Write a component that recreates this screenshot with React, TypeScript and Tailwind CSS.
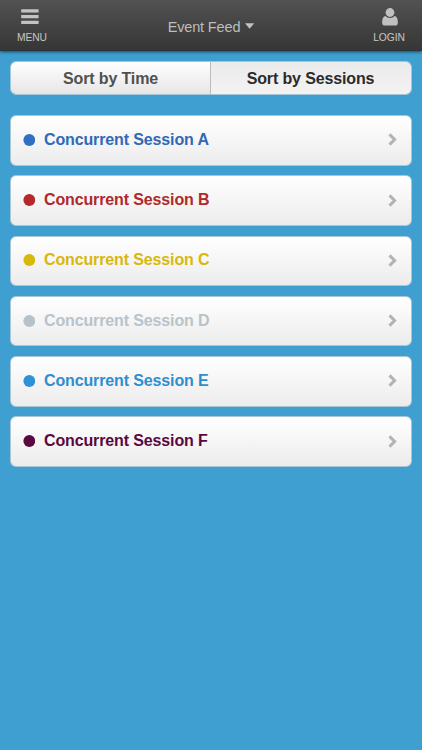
const sessions = [
  { name: "Concurrent Session A", text: "text-[#3069b8]", dot: "fill-[#2f70c2]" },
  { name: "Concurrent Session B", text: "text-[#b0292b]", dot: "fill-[#b5292b]" },
  { name: "Concurrent Session C", text: "text-[#d8b80b]", dot: "fill-[#d8b80b]" },
  { name: "Concurrent Session D", text: "text-[#b8c3ca]", dot: "fill-[#b5c2ca]" },
  { name: "Concurrent Session E", text: "text-[#2e8ed0]", dot: "fill-[#2e92d6]" },
  { name: "Concurrent Session F", text: "text-[#5a0840]", dot: "fill-[#5a0840]" },
];

function Chevron() {
  return (
    <svg width="9" height="13" viewBox="0 0 9 13" fill="none" stroke="#b3b3b3" strokeWidth="3">
      <path d="M1.500 1.400 6.600 6.500 1.500 11.600" />
    </svg>
  );
}

export default function App() {
  return (
    <div className="flex h-[750px] w-full flex-col overflow-hidden bg-[#3f9fd1] font-['Liberation_Sans',Arial,sans-serif]">
      <header className="relative grid h-[51px] shrink-0 grid-cols-[64px_1fr_66px] border-b border-[#29383f] bg-linear-to-b from-[#525252] to-[#363636] text-[#c6c6c6] shadow-[0_1px_3px_rgba(0,0,0,0.55)]">
        <button className="flex flex-col items-center pt-[9px]">
          <svg className="mr-[4px]" width="18" height="16" viewBox="0 0 18 16" fill="#c2c2c2">
            <rect x="0.2" y="0.2" width="17.4" height="3.4" rx="0.5" />
            <rect x="0.2" y="5.9" width="17.4" height="3.4" rx="0.5" />
            <rect x="0.2" y="11.7" width="17.4" height="3.4" rx="0.5" />
          </svg>
          <span className="mt-[7px] text-[10.3px] leading-3 tracking-[-0.1px]">MENU</span>
        </button>
        <button className="flex items-start justify-center pt-[19px] pl-[3px] text-[14.5px] leading-4 tracking-[-0.15px] text-[#bdbdbd]">
          Event Feed
          <svg className="ml-[5px] mt-[4px]" width="10" height="6" viewBox="0 0 10 6" fill="#c2c2c2">
            <path d="M0 .2h9.200L4.600 5.800Z" />
          </svg>
        </button>
        <button className="flex flex-col items-center pt-[8px]">
          <svg className="ml-[2px]" width="16" height="18" viewBox="0 0 16 18" fill="#c0c0c0">
            <path d="M3.5 8C4.6 9.300 6.200 9.900 8 9.900s3.400-.600 4.500-1.900c2.200.300 3.400 2.700 3.400 6.400 0 2-.900 3.100-2.600 3.100H2.700C1 17.500.1 16.400.1 14.400.1 10.700 1.300 8.300 3.500 8Z" />
            <circle cx="8" cy="4.500" r="4.400" />
          </svg>
          <span className="mt-[6px] text-[10.3px] leading-3 tracking-[-0.1px]">LOGIN</span>
        </button>
      </header>
      <main className="px-[10px] pt-[10px]">
        <div className="grid h-[34px] grid-cols-2 overflow-hidden rounded-[6px] border border-[#a4c6d8] text-center text-base leading-[33px] font-bold tracking-[-0.13px]">
          <button className="border-r border-[#bcbcbc] bg-linear-to-b from-white to-[#e5e5e5] text-[#505050]">Sort by Time</button>
          <button className="bg-linear-to-b from-[#ebebeb] to-[#f3f3f3] pr-px text-[#2b2b2b]">Sort by Sessions</button>
        </div>
        <ul className="mt-[20px] flex flex-col gap-[9.800px]">
          {sessions.map((s) => (
            <li
              key={s.name}
              className="flex h-[50.500px] items-center rounded-[6px] border border-[#a9c6d5] bg-linear-to-b from-white to-[#ececec] pr-[14px] pb-px pl-3"
            >
              <svg className={`mr-[9px] ${s.dot}`} width="12" height="12" viewBox="0 0 12 12">
                <circle cx="6.300" cy="6" r="5.900" />
              </svg>
              <span className={`flex-1 text-base leading-5 font-bold tracking-[-0.130px] ${s.text}`}>{s.name}</span>
              <Chevron />
            </li>
          ))}
        </ul>
      </main>
    </div>
  );
}
